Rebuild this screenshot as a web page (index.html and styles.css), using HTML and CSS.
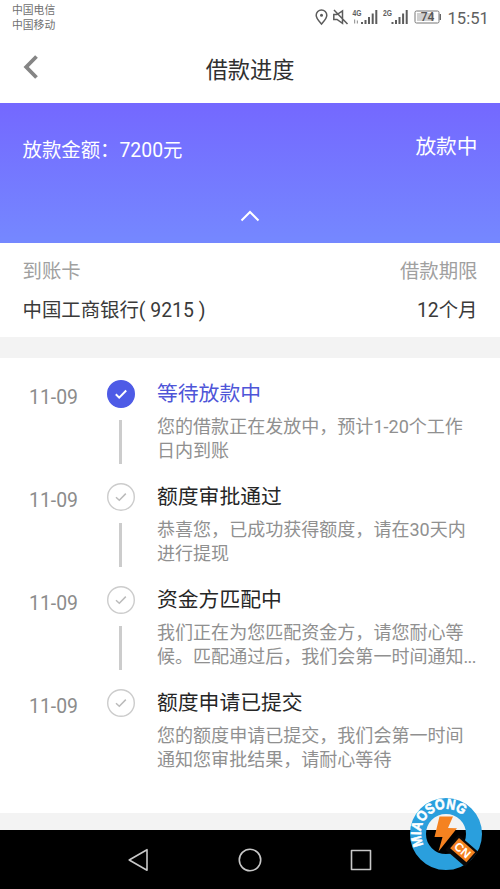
FILE: index.html
```html
<!DOCTYPE html>
<html lang="zh-CN">
<head>
<meta charset="utf-8">
<title>借款进度</title>
<link rel="stylesheet" href="styles.css">
</head>
<body>
<div class="screen">
  <header class="status">
    <div class="carriers"><span>中国电信</span><span>中国移动</span></div>
    <div class="indicators">
      <svg class="sys-icons" width="126" height="24" viewBox="0 0 126 24">
        <g fill="none" stroke="#5c5c5c" stroke-width="1.5">
          <path d="M6.500 18C4.500 15.500 1.200 12.500 1.200 9.200a5.300 5.300 0 0 1 10.600 0C11.800 12.500 8.500 15.500 6.500 18z"/>
          <path d="M18.800 8.500v5h3.200l5.500 3.800V4.800L22 8.500zM19 4l13.500 14"/>
        </g>
        <circle cx="6.500" cy="9.300" r="1.500" fill="#5c5c5c"/>
        <g fill="#5c5c5c">
          <path d="M46 16h2v2h-2zM49.500 14h2v4h-2zM53 11h2v7h-2zM56.700 7.500h2V18h-2zM60.300 4h2v14h-2z"/>
          <path d="M76.500 16h2v2h-2zM80 14h2v4h-2zM83.500 11h2v7h-2zM87.100 7.500h2V18h-2zM90.700 4h2v14h-2z"/>
          <path d="M39 13.500h1.200v4H39zM41.800 14.500H43v3h-1.200z" opacity=".6"/>
          <text class="net" x="37.500" y="10" textLength="9" lengthAdjust="spacingAndGlyphs">4G</text>
          <text class="net" x="68" y="10" textLength="9" lengthAdjust="spacingAndGlyphs">2G</text>
        </g>
        <rect x="100" y="5" width="24" height="12" rx="1.500" fill="#fff" stroke="#777"/>
        <rect x="102" y="7" width="17" height="8" fill="#d0d0d0"/>
        <path d="M125.300 8v6" stroke="#666" stroke-width="1.400"/>
        <text class="charge" x="112.500" y="15.300" text-anchor="middle">74</text>
      </svg>
      <span class="clock">15:51</span>
    </div>
  </header>
  <div class="titlebar">
    <svg class="back" width="16" height="24" viewBox="0 0 16 24"><path d="M14.500 1.500 4.200 12l10.300 10.500" fill="none" stroke="#858585" stroke-width="3.800"/></svg>
    <h1>借款进度</h1>
  </div>
  <section class="hero">
    <div class="hero-row"><span class="amount">放款金额：7200元</span><span class="state">放款中</span></div>
    <svg class="fold" width="20" height="12" viewBox="0 0 20 12"><path d="M1.500 10.500 10 2l8.500 8.500" fill="none" stroke="#fff" stroke-width="2"/></svg>
  </section>
  <section class="account">
    <div class="row label"><span>到账卡</span><span>借款期限</span></div>
    <div class="row"><span>中国工商银行( 9215 )</span><span>12个月</span></div>
  </section>
  <main class="timeline">
    <article class="step current">
      <time>11-09</time>
      <div class="track"><svg class="mark" viewBox="0 0 28 28"><circle cx="14" cy="14" r="13.300"/><path d="m8.800 14.300 3.400 3.300 7-7.100"/></svg><i></i></div>
      <div class="copy"><h2>等待放款中</h2><p>您的借款正在发放中，预计1-20个工作<br>日内到账</p></div>
    </article>
    <article class="step">
      <time>11-09</time>
      <div class="track"><svg class="mark" viewBox="0 0 28 28"><circle cx="14" cy="14" r="13.300"/><path d="m9 14.200 3.300 3 6.500-6.600"/></svg><i></i></div>
      <div class="copy"><h2>额度审批通过</h2><p>恭喜您，已成功获得额度，请在30天内<br>进行提现</p></div>
    </article>
    <article class="step">
      <time>11-09</time>
      <div class="track"><svg class="mark" viewBox="0 0 28 28"><circle cx="14" cy="14" r="13.300"/><path d="m9 14.200 3.300 3 6.500-6.600"/></svg><i></i></div>
      <div class="copy"><h2>资金方匹配中</h2><p>我们正在为您匹配资金方，请您耐心等<br>候。匹配通过后，我们会第一时间通知<span class="more">...</span></p></div>
    </article>
    <article class="step">
      <time>11-09</time>
      <div class="track"><svg class="mark" viewBox="0 0 28 28"><circle cx="14" cy="14" r="13.300"/><path d="m9 14.200 3.300 3 6.500-6.600"/></svg></div>
      <div class="copy"><h2>额度申请已提交</h2><p>您的额度申请已提交，我们会第一时间<br>通知您审批结果，请耐心等待</p></div>
    </article>
  </main>
  <nav class="keys">
    <svg viewBox="0 0 24 24"><path d="M20 1.700v20.600L2.200 12z"/></svg>
    <svg viewBox="0 0 24 24"><circle cx="12" cy="12" r="10.700"/></svg>
    <svg viewBox="0 0 24 24"><rect x="2.500" y="2.500" width="19" height="19"/></svg>
  </nav>
  <svg class="badge" width="76" height="76" viewBox="0 0 76 76">
    <defs><path id="arc" d="M15.700 49A24.800 24.800 0 0 1 57 22L63 29.500"/></defs>
    <circle cx="38" cy="38" r="28" fill="none" stroke="#2a9fdd" stroke-width="16"/>
    <text class="brand"><textPath href="#arc" textLength="69" lengthAdjust="spacingAndGlyphs">MIAOSONG</textPath></text>
    <path d="M31.500 20.500H45L40 32l9 .3L30.500 55.500l4-14.500h-8z" fill="#f58220"/>
    <g transform="translate(54.500 54) rotate(41)">
      <rect x="-13" y="-9" width="26" height="20" fill="#080808"/>
      <rect x="-10.500" y="-6.700" width="21.500" height="13.400" fill="#f58220"/>
      <text class="cn" x="0" y="4.300" text-anchor="middle">CN</text>
    </g>
  </svg>
</div>
</body>
</html>
```
FILE: styles.css
```css
* { box-sizing: border-box; }
body { margin: 0; background: #fff; font-family: Roboto, "Noto Sans CJK SC", sans-serif; color: #3a3a3a; }
.screen { position: relative; width: 500px; height: 889px; overflow: hidden; display: flex; flex-direction: column; background: #fff; }
h1, h2, p { margin: 0; font-weight: 400; }

.status { height: 36px; padding: 1px 11px 0 12px; display: flex; justify-content: space-between; }
.carriers { display: flex; flex-direction: column; padding-top: 1.500px; font-size: 10.800px; line-height: 15.500px; color: #707070; }
.indicators { display: flex; gap: 6.500px; height: 34px; align-items: center; }
.net { font: 700 9.500px "Liberation Sans", sans-serif; }
.charge { font: 500 12px Roboto, sans-serif; fill: #555; }
.clock { font-size: 16.600px; width: 41.500px; color: #606060; white-space: nowrap; }

.titlebar { position: relative; height: 67px; display: flex; align-items: center; justify-content: center; }
.titlebar h1 { font-size: 22.200px; line-height: 67px; padding-top: 1px; color: #303030; }
.back { position: absolute; left: 22px; top: 19px; }

.hero { height: 140px; padding: 25px 22.500px 0; color: #fff; display: flex; flex-direction: column; align-items: center; background: linear-gradient(#7468ff, #7588ff); }
.hero-row { width: 100%; height: 40px; display: flex; justify-content: space-between; }
.amount { font-size: 19.400px; line-height: 46px; }
.state { font-size: 20.700px; line-height: 38px; }
.fold { margin-top: 42px; }

.account { height: 94px; padding: 9px 22.500px 0; }
.row { height: 39px; display: flex; justify-content: space-between; font-size: 19.400px; line-height: 39px; white-space: pre; }
.label { color: #a0a0a0; }

.timeline { border-top: 21px solid #f3f3f3; border-bottom: 17px solid #f3f3f3; height: 493px; padding: 21px 0 0 29px; }
.step { display: grid; grid-template-columns: 78px 28px 1fr; height: 103px; }
.step time { font-size: 19.400px; line-height: 38px; color: #8c8c8c; }
.track { display: flex; flex-direction: column; align-items: center; padding-top: 1px; }
.mark { width: 28px; height: 28px; fill: none; stroke: #ccc; stroke-width: 1.400; flex: none; }
.mark path { stroke: #bbb; stroke-width: 1.500; }
.current .mark circle { fill: #4e5be6; stroke: #4e5be6; }
.current .mark path { stroke: #fff; stroke-width: 2; }
.track i { width: 3px; height: 44px; margin: 12px 1px 0 0; background: #ccc; }
.copy { padding-left: 22px; white-space: nowrap; }
.copy h2 { font-size: 20.800px; line-height: 31px; color: #262626; }
.current h2 { color: #4e55d8; }
.copy p { margin-top: 5px; font-size: 18.050px; line-height: 23.700px; color: #909090; }
.more { letter-spacing: -.7px; }

.keys { flex: 1; background: #000; display: flex; justify-content: center; align-items: center; gap: 87px; }
.keys svg { width: 24px; height: 24px; fill: none; stroke: #c8c8c8; stroke-width: 1.600; stroke-linejoin: round; }

.badge { position: absolute; left: 408px; top: 796px; }
.brand { font: 700 14.500px "Liberation Sans", sans-serif; fill: #fff; stroke: #fff; stroke-width: .6px; }
.cn { font: 700 12px "Liberation Sans", sans-serif; fill: #fff; }
```
